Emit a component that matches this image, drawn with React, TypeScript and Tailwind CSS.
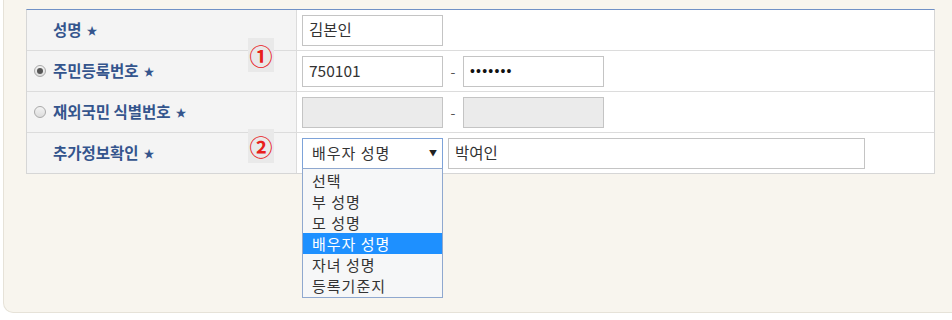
import React from "react";

const KR = { fontFamily: '"Noto Sans CJK KR", "Noto Sans", sans-serif' };

function Radio({ checked }: { checked?: boolean }) {
  return (
    <span className="relative inline-flex h-[12px] w-[12px] items-center justify-center rounded-full border border-[#a9a9a9] bg-gradient-to-b from-[#f3f3f3] to-[#dcdcdc]">
      {checked && <span className="h-[6px] w-[6px] rounded-full bg-[#555]" />}
    </span>
  );
}

function Label({ text, radio }: { text: string; radio?: "on" | "off" }) {
  return (
    <div className="flex h-full w-[270px] items-center border-r border-[#dcdcdc] bg-[#f4f4f4] pl-[7px]">
      <span className="flex w-[19px] items-center">
        {radio && <Radio checked={radio === "on"} />}
      </span>
      <span className="text-[15.5px] font-bold text-[#34558d]">{text}</span>
      <span className="ml-[5px] text-[11px] text-[#34558d]">★</span>
    </div>
  );
}

function Input({ value, disabled, w = "w-[141px]", dots }: { value?: string; disabled?: boolean; w?: string; dots?: boolean }) {
  return (
    <div
      className={`flex h-[31px] ${w} items-center border border-[#c4c4c4] px-[6px] text-[15.5px] text-[#333] ${disabled ? "bg-[#ebebeb]" : "bg-white"}`}
    >
      {dots ? (
        <span className="text-[14px] tracking-[1.2px] text-[#111]" style={{ fontFamily: '"Liberation Sans", sans-serif' }}>
          •••••••
        </span>
      ) : (
        value
      )}
    </div>
  );
}

const options = ["선택", "부 성명", "모 성명", "배우자 성명", "자녀 성명", "등록기준지"];

export default function App() {
  return (
    <div className="h-[320px] w-[952px] overflow-hidden bg-white" style={KR}>
      <div className="ml-[3px] h-[313px] w-[960px] rounded-bl-[10px] border-b border-l border-[#e6e2d8] bg-[#f8f5ee] pl-[22px] pt-[9px]">
        <div className="relative w-[909px] border border-t-[#7191c6] border-x-[#d6d6d6] border-b-[#d6d6d6] bg-white">
          {/* Row 1 */}
          <div className="flex h-[41px] border-b border-[#dcdcdc]">
            <Label text="성명" />
            <div className="flex items-center pl-[5px]">
              <Input value="김본인" />
            </div>
          </div>
          {/* Row 2 */}
          <div className="flex h-[41px] border-b border-[#dcdcdc]">
            <Label text="주민등록번호" radio="on" />
            <div className="flex items-center pl-[5px]">
              <Input value="750101" />
              <span className="w-[20px] text-center text-[14px] text-[#555]">-</span>
              <Input dots />
            </div>
          </div>
          {/* Row 3 */}
          <div className="flex h-[41px] border-b border-[#dcdcdc]">
            <Label text="재외국민 식별번호" radio="off" />
            <div className="flex items-center pl-[5px]">
              <Input disabled />
              <span className="w-[20px] text-center text-[14px] text-[#555]">-</span>
              <Input disabled />
            </div>
          </div>
          {/* Row 4 */}
          <div className="flex h-[40px]">
            <Label text="추가정보확인" />
            <div className="flex items-center gap-[5px] pl-[5px]">
              <div className="relative">
                <div className="flex h-[31px] w-[141px] items-center justify-between border border-[#7ea3d9] bg-white pl-[9px] pr-[4px] text-[15px] tracking-[1px] text-[#333]">
                  <span>배우자 성명</span>
                  <span className="text-[8px] text-[#222]">▼</span>
                </div>
                <div className="absolute left-0 top-[30px] z-10 w-[141px] border border-[#8fa8cf] bg-[#f6f7f8] py-[1px]">
                  {options.map((o) => (
                    <div
                      key={o}
                      className={`h-[21px] pl-[9px] text-[15px] leading-[21px] tracking-[1px] ${o === "배우자 성명" ? "bg-[#1e90ff] text-white" : "text-[#333]"}`}
                    >
                      {o}
                    </div>
                  ))}
                </div>
              </div>
              <Input value="박여인" w="w-[417px]" />
            </div>
          </div>

          {/* Annotation markers */}
          <div className="absolute left-[221px] top-[28px] flex h-[34px] w-[26px] items-center justify-center bg-[#e9e9e9] text-[23px] font-bold leading-none text-[#e8201c]">
            ①
          </div>
          <div className="absolute left-[221px] top-[119px] flex h-[34px] w-[26px] items-center justify-center bg-[#e9e9e9] text-[23px] font-bold leading-none text-[#e8201c]">
            ②
          </div>
        </div>
      </div>
    </div>
  );
}
